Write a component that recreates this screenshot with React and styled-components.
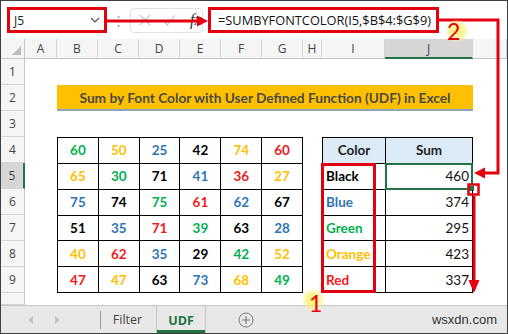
import React from 'react';
import styled, { createGlobalStyle } from 'styled-components';

const GlobalStyle = createGlobalStyle`
  html, body { margin: 0; padding: 0; background: #fff; }
  body { font-family: Lato, "Open Sans", sans-serif; }
`;

const GREEN = '#00B050';
const ORANGE = '#FFC000';
const BLUE = '#2E75B6';
const BLACK = '#000';
const RED = '#F01A1A';
const XL = '#217346';
const ANNOT = '#E3000F';

const Frame = styled.div`
  position: relative;
  width: 508px;
  height: 334px;
  box-sizing: border-box;
  border: 1px solid #404040;
  overflow: hidden;
  background: #fff;
  display: flex;
  flex-direction: column;
`;

const FormulaBar = styled.div`
  height: 38px;
  flex: none;
  display: flex;
  align-items: center;
  padding-left: 6px;
`;

const NameBox = styled.div`
  width: 100px;
  height: 25px;
  box-sizing: border-box;
  border: 1px solid #c6c6c6;
  display: flex;
  align-items: center;
  justify-content: space-between;
  padding: 0 6px 0 6px;
  font-family: "Open Sans", sans-serif;
  font-size: 12px;
  color: #222;
`;

const Dots = styled.div`
  width: 23px;
  text-align: center;
  color: #9a9a9a;
  font-size: 13px;
  line-height: 1;
`;

const FxGroup = styled.div`
  width: 73px;
  height: 25px;
  box-sizing: border-box;
  border: 1px solid #e1e1e1;
  border-radius: 4px;
  display: flex;
  align-items: center;
  gap: 12px;
  padding-left: 8px;
`;

const Fx = styled.span`
  font-family: "Liberation Serif", serif;
  font-style: italic;
  font-size: 16px;
  color: #333;
  margin-left: 2px;
`;

const FormulaInput = styled.div`
  margin-left: 5px;
  flex: 1;
  height: 25px;
  display: flex;
  align-items: center;
  padding-left: 10px;
  font-family: "Open Sans", sans-serif;
  font-size: 12.8px;
  color: #111;
  white-space: nowrap;
`;

const Sheet = styled.div`
  display: grid;
  grid-template-columns: 24px 32px repeat(6, 41px) 19px 63px 88px 1fr;
  grid-template-rows: 20px repeat(9, 26px) 12px;
  height: 266px;
  flex: none;
  overflow: hidden;
`;

const Corner = styled.div`
  grid-column: 1;
  grid-row: 1;
  background: #f5f5f5;
  border-right: 1px solid #c6c6c6;
  border-bottom: 1px solid #c6c6c6;
  display: flex;
  align-items: flex-end;
  justify-content: flex-end;
  padding: 0 3px 3px 0;
`;

const ColHeader = styled.div`
  grid-column: ${p => p.$col};
  grid-row: 1;
  background: ${p => (p.$active ? '#d6d6d6' : '#f5f5f5')};
  border-right: 1px solid #d4d4d4;
  border-bottom: ${p => (p.$active ? `2px solid ${XL}` : '1px solid #c6c6c6')};
  display: flex;
  align-items: center;
  justify-content: center;
  font-family: "Open Sans", sans-serif;
  font-size: 12px;
  color: #444;
`;

const RowHeader = styled.div`
  grid-column: 1;
  grid-row: ${p => p.$row};
  background: ${p => (p.$active ? '#d6d6d6' : '#f5f5f5')};
  border-right: ${p => (p.$active ? `2px solid ${XL}` : '1px solid #c6c6c6')};
  border-bottom: 1px solid #d4d4d4;
  display: flex;
  align-items: center;
  justify-content: center;
  font-family: "Open Sans", sans-serif;
  font-size: 12px;
  color: #444;
`;

const Title = styled.div`
  grid-column: 3 / 12;
  grid-row: 3;
  background: #FFC000;
  border-bottom: 2px solid #8EA4BE;
  display: flex;
  align-items: center;
  justify-content: center;
  font-weight: 700;
  font-size: 13.7px;
  color: #4a4a44;
`;

const DataTable = styled.div`
  grid-column: 3 / 9;
  grid-row: 5 / 11;
  display: grid;
  grid-template-columns: repeat(6, 1fr);
  grid-template-rows: repeat(6, 1fr);
  border-top: 1px solid #000;
  border-left: 1px solid #000;
`;

const DataCell = styled.div`
  border-right: 1px solid #000;
  border-bottom: 1px solid #000;
  display: flex;
  align-items: center;
  justify-content: center;
  font-weight: 700;
  font-size: 13.5px;
  color: ${p => p.$color};
`;

const SumTable = styled.div`
  grid-column: 10 / 12;
  grid-row: 5 / 11;
  display: grid;
  grid-template-columns: 63px 1fr;
  grid-template-rows: repeat(6, 1fr);
  border-top: 1px solid #000;
  border-left: 1px solid #000;
`;

const SumHead = styled.div`
  background: #DDEBF7;
  border-right: 1px solid #000;
  border-bottom: 1px solid #000;
  display: flex;
  align-items: center;
  justify-content: center;
  font-weight: 700;
  font-size: 13.5px;
  color: #222;
`;

const NameCell = styled.div`
  border-right: 1px solid #000;
  border-bottom: 1px solid #000;
  display: flex;
  align-items: center;
  padding-left: 3px;
  font-weight: 700;
  font-size: 13.5px;
  color: ${p => p.$color};
`;

const SumCell = styled.div`
  position: relative;
  border-right: 1px solid #000;
  border-bottom: 1px solid #000;
  display: flex;
  align-items: center;
  justify-content: flex-end;
  padding-right: 3px;
  font-size: 13.5px;
  color: #111;
  ${p =>
    p.$selected &&
    `
    &::before {
      content: '';
      position: absolute;
      left: -1px; top: -1px; right: -1px; bottom: -1px;
      border: 2px solid ${XL};
    }
    &::after {
      content: '';
      position: absolute;
      right: -3px; bottom: -3px;
      width: 5px; height: 5px;
      background: ${XL};
      border: 1px solid #fff;
    }
  `}
`;

const TabBar = styled.div`
  flex: 1;
  background: #e8e8e8;
  border-top: 1px solid #c6c6c6;
  display: flex;
  align-items: stretch;
`;

const NavGroup = styled.div`
  width: 99px;
  display: flex;
  align-items: center;
  padding-left: 27px;
  box-sizing: border-box;
  gap: 22px;
`;

const Separator = styled.div`
  width: 1px;
  background: #9a9a9a;
  margin: 5px 0 4px;
`;

const Tab = styled.div`
  width: ${p => p.$w}px;
  margin-left: ${p => p.$ml || 0}px;
  display: flex;
  align-items: center;
  justify-content: center;
  font-family: "Open Sans", sans-serif;
  font-size: 12.5px;
  color: ${p => (p.$active ? XL : '#444')};
  font-weight: ${p => (p.$active ? 700 : 400)};
  box-sizing: border-box;
  ${p =>
    p.$active &&
    `
    border-left: 1px solid #c4c4c4;
    border-right: 1px solid #c4c4c4;
    box-shadow: inset 0 -3px 0 ${XL};
    padding-top: 1px;
  `}
`;

const AddSheet = styled.div`
  margin-left: 32px;
  display: flex;
  align-items: center;
`;

const Watermark = styled.div`
  margin-left: auto;
  padding-right: 10px;
  display: flex;
  align-items: center;
  font-family: "Liberation Sans", sans-serif;
  font-size: 13px;
  color: #333;
`;

const Overlay = styled.svg`
  position: absolute;
  left: -1px;
  top: -1px;
  width: 508px;
  height: 334px;
  pointer-events: none;
`;

const Marker = styled.text`
  font-family: Lato, sans-serif;
  font-size: 23px;
  fill: ${ANNOT};
`;

const columns = ['A', 'B', 'C', 'D', 'E', 'F', 'G', 'H', 'I', 'J', 'K'];

const data = [
  [[60, GREEN], [50, ORANGE], [25, BLUE], [42, BLACK], [74, ORANGE], [60, RED]],
  [[65, ORANGE], [30, GREEN], [71, BLACK], [41, BLUE], [36, RED], [27, ORANGE]],
  [[75, BLUE], [74, BLACK], [75, GREEN], [61, RED], [62, BLUE], [67, BLACK]],
  [[51, BLACK], [35, BLUE], [71, RED], [39, GREEN], [63, BLACK], [28, BLUE]],
  [[40, ORANGE], [62, RED], [35, BLUE], [29, BLACK], [42, GREEN], [52, ORANGE]],
  [[47, RED], [47, ORANGE], [63, BLACK], [73, BLUE], [68, ORANGE], [49, GREEN]],
];

const sums = [
  ['Black', BLACK, 460],
  ['Blue', BLUE, 374],
  ['Green', GREEN, 295],
  ['Orange', ORANGE, 423],
  ['Red', RED, 337],
];

function Annotations() {
  return (
    <Overlay viewBox="0 0 508 334">
      <defs>
        <radialGradient id="glow">
          <stop offset="0%" stopColor="#ffef3a" stopOpacity="0.85" />
          <stop offset="70%" stopColor="#fff176" stopOpacity="0.55" />
          <stop offset="100%" stopColor="#fff59d" stopOpacity="0" />
        </radialGradient>
      </defs>
      <g fill="none" stroke={ANNOT} strokeWidth="3">
        <rect x="8.5" y="8.5" width="97" height="23" />
        <rect x="209.5" y="8.5" width="228" height="23" />
        <line x1="107" y1="21" x2="199" y2="21" />
        <polyline points="438,20 498,20 498,173 483,173" />
        <rect x="322.5" y="164.5" width="52" height="127" />
        <rect x="468.5" y="184.5" width="10" height="10" strokeWidth="2.5" />
        <line x1="474" y1="196" x2="474" y2="282" />
      </g>
      <g fill={ANNOT}>
        <polygon points="197,15.5 208,21 197,26.5" />
        <polygon points="485,167.5 474,173 485,178.5" />
        <polygon points="468.5,280 479.5,280 474,293" />
      </g>
      <circle cx="457" cy="31" r="12" fill="url(#glow)" />
      <Marker x="447" y="40">2</Marker>
      <circle cx="313" cy="300" r="12" fill="url(#glow)" />
      <Marker x="309" y="312">1</Marker>
    </Overlay>
  );
}

export default function App() {
  return (
    <>
      <GlobalStyle />
      <Frame>
        <FormulaBar>
          <NameBox>
            J5
            <svg width="10" height="6" viewBox="0 0 10 6">
              <polyline points="1,1 5,5 9,1" fill="none" stroke="#555" strokeWidth="1.2" />
            </svg>
          </NameBox>
          <Dots>⋮</Dots>
          <FxGroup>
            <svg width="12" height="12" viewBox="0 0 12 12">
              <path d="M1 1 L11 11 M11 1 L1 11" stroke="#c8c8c8" strokeWidth="1.2" />
            </svg>
            <svg width="13" height="12" viewBox="0 0 13 12">
              <polyline points="1,7 4.5,11 12,1" fill="none" stroke="#c8c8c8" strokeWidth="1.2" />
            </svg>
            <Fx>fx</Fx>
          </FxGroup>
          <FormulaInput>=SUMBYFONTCOLOR(I5,$B$4:$G$9)</FormulaInput>
        </FormulaBar>

        <Sheet>
          <Corner>
            <svg width="9" height="9" viewBox="0 0 9 9">
              <polygon points="9,0 9,9 0,9" fill="#bdbdbd" />
            </svg>
          </Corner>
          {columns.map((c, i) => (
            <ColHeader key={c} $col={i + 2} $active={c === 'J'}>
              {c === 'K' ? '' : c}
            </ColHeader>
          ))}
          {Array.from({ length: 10 }, (_, i) => (
            <RowHeader key={i} $row={i + 2} $active={i === 4}>
              {i < 9 ? i + 1 : ''}
            </RowHeader>
          ))}

          <Title>Sum by Font Color with User Defined Function (UDF) in Excel</Title>

          <DataTable>
            {data.flat().map(([v, color], i) => (
              <DataCell key={i} $color={color}>{v}</DataCell>
            ))}
          </DataTable>

          <SumTable>
            <SumHead>Color</SumHead>
            <SumHead>Sum</SumHead>
            {sums.map(([name, color, total], i) => (
              <React.Fragment key={name}>
                <NameCell $color={color}>{name}</NameCell>
                <SumCell $selected={i === 0}>{total}</SumCell>
              </React.Fragment>
            ))}
          </SumTable>
        </Sheet>

        <TabBar>
          <NavGroup>
            <svg width="5" height="8" viewBox="0 0 5 8">
              <polygon points="5,0 5,8 0,4" fill="#c2c2c2" />
            </svg>
            <svg width="5" height="8" viewBox="0 0 5 8">
              <polygon points="0,0 0,8 5,4" fill="#c2c2c2" />
            </svg>
          </NavGroup>
          <Separator />
          <Tab $w={53}>Filter</Tab>
          <Tab $w={50} $ml={2} $active>UDF</Tab>
          <AddSheet>
            <svg width="16" height="16" viewBox="0 0 16 16">
              <circle cx="8" cy="8" r="7" fill="none" stroke="#7a7a7a" strokeWidth="1" />
              <path d="M8 4 V12 M4 8 H12" stroke="#7a7a7a" strokeWidth="1.2" />
            </svg>
          </AddSheet>
          <Watermark>wsxdn.com</Watermark>
        </TabBar>

        <Annotations />
      </Frame>
    </>
  );
}
